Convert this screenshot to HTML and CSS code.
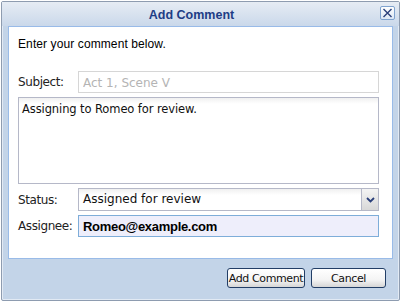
FILE: index.html
```html
<!DOCTYPE html>
<html>
<head>
    <meta charset="UTF-8">
    <title>Add Comment</title>
    <link rel="stylesheet" href="styles.css">
</head>
<body>
    <div class="window">
        <div class="header">
            <span class="title">Add Comment</span>
            <span class="close">
                <svg width="11" height="10" viewBox="0 0 11 10">
                    <path d="M1.5 1 L9.5 9 M9.5 1 L1.5 9" stroke="#2a3f7a" stroke-width="1.4" fill="none"/>
                </svg>
            </span>
        </div>

        <div class="panel">
            <p class="intro">Enter your comment below.</p>

            <div class="row subject-row">
                <label>Subject:</label>
                <input type="text" class="field disabled" value="Act 1, Scene V" disabled>
            </div>

            <textarea class="comment">Assigning to Romeo for review.</textarea>

            <div class="row">
                <label>Status:</label>
                <div class="combo">
                    <span class="combo-text">Assigned for review</span>
                    <span class="combo-btn">
                        <svg width="9" height="6" viewBox="0 0 9 6">
                            <path d="M1 1 L4.5 4.5 L8 1" stroke="#2a3f7a" stroke-width="1.8" fill="none"/>
                        </svg>
                    </span>
                </div>
            </div>

            <div class="row">
                <label>Assignee:</label>
                <input type="text" class="field focused" value="Romeo@example.com">
            </div>
        </div>

        <div class="buttons">
            <button class="btn">Add Comment</button>
            <button class="btn cancel">Cancel</button>
        </div>
    </div>
</body>
</html>
```

FILE: styles.css
```css
body {
    margin: 0;
    background: #ffffff;
    font-family: "DejaVu Sans", Verdana, sans-serif;
    font-size: 11px;
}
.window {
    margin: 1px;
    width: 397px;
    height: 298px;
    border: 1px solid #8e9cb0;
    border-radius: 2px;
    background: #c3d4e8;
    box-shadow: inset 0 0 0 1px #e2eaf4;
    display: flex;
    flex-direction: column;
}
.header {
    height: 24px;
    position: relative;
    background: linear-gradient(#e6ecf4, #cad8ea);
    display: flex;
    align-items: center;
    justify-content: center;
    padding-right: 18px;
}
.title {
    font-weight: bold;
    font-family: "Liberation Sans", Arial, sans-serif;
    font-size: 12.5px;
    color: #1e3d86;
    margin-top: 1px;
}
.close {
    position: absolute;
    right: 4px;
    top: 4px;
    width: 13px;
    height: 12px;
    border: 1px solid #7fa3cf;
    border-radius: 2px;
    background: linear-gradient(#ffffff, #dce7f5);
    display: flex;
    align-items: center;
    justify-content: center;
}
.panel {
    margin: 0 6px 0 6px;
    height: 233px;
    background: #ffffff;
    border: 1px solid #99bbe8;
    padding: 0 9px;
    box-sizing: border-box;
}
.intro {
    margin: 10px 0 0 0;
    font-family: "Liberation Sans", Arial, sans-serif;
    font-size: 12px;
    letter-spacing: 0.1px;
    color: #000;
    height: 34px;
}
.row {
    display: flex;
    align-items: center;
    margin-top: 4px;
}
.subject-row {
    margin-top: 0;
}
label {
    width: 60px;
    color: #222;
    font-size: 12px;
    font-family: "DejaVu Sans", sans-serif;
    letter-spacing: -0.4px;
}
.field {
    width: 301px;
    height: 22px;
    box-sizing: border-box;
    padding: 1px 4px 0 4px;
    font-family: "DejaVu Sans", sans-serif;
    font-size: 12px;
    outline: none;
}
.disabled {
    border: 1px solid #d6d6d6;
    background: #ffffff;
    color: #b4b4b4;
}
.focused {
    border: 1px solid #7eadd9;
    background: #eeeefb;
    color: #000;
    font-weight: bold;
    font-family: "Liberation Sans", Arial, sans-serif;
    font-size: 13px;
    letter-spacing: -0.3px;
}
.comment {
    display: block;
    width: 361px;
    height: 87px;
    margin-top: 4px;
    box-sizing: border-box;
    border: 1px solid #b5b8c8;
    background: linear-gradient(#f0f0f0, #ffffff 6px);
    padding: 4px 3px;
    font-family: "DejaVu Sans", sans-serif;
    font-size: 11.5px;
    letter-spacing: -0.1px;
    color: #111;
    resize: none;
    outline: none;
}
.combo {
    width: 301px;
    height: 23px;
    box-sizing: border-box;
    border: 1px solid #b5b8c8;
    display: flex;
    background: linear-gradient(#f0f0f0, #ffffff 6px);
}
.combo-text {
    flex: 1;
    padding: 3px 4px 0 4px;
    font-size: 12px;
    color: #111;
}
.combo-btn {
    width: 16px;
    border-left: 1px solid #b5b8c8;
    background: linear-gradient(#f4f4f4, #d8d8d8);
    display: flex;
    align-items: center;
    justify-content: center;
}
.buttons {
    display: flex;
    justify-content: flex-end;
    gap: 6px;
    padding: 9px 13px 0 0;
}
.btn {
    height: 20px;
    width: 78px;
    border: 1px solid #223e66;
    border-radius: 3px;
    background: linear-gradient(#ffffff, #f4f4f4 60%, #d6d6d6);
    font-family: "DejaVu Sans", sans-serif;
    font-size: 11px;
    letter-spacing: -0.4px;
    white-space: nowrap;
    color: #111;
    padding: 0;
}
.cancel {
    width: 75px;
}
```
